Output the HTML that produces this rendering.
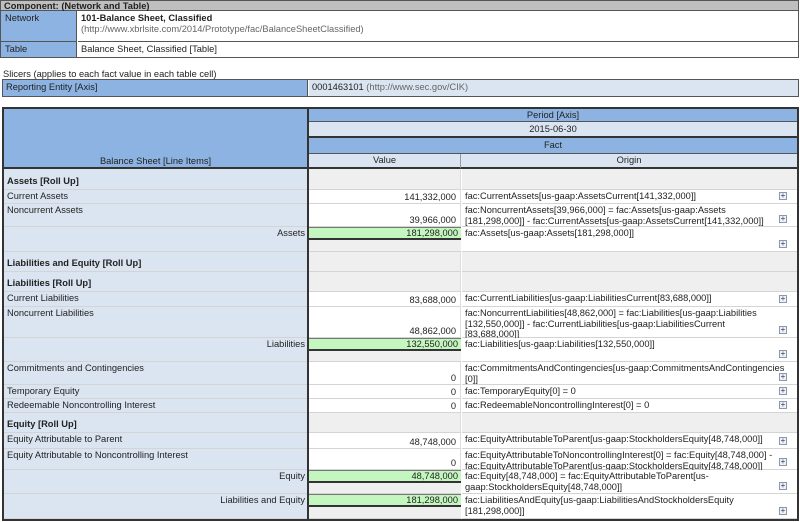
<!DOCTYPE html>
<html><head><meta charset="utf-8"><style>
*{margin:0;padding:0;box-sizing:border-box}
body{width:800px;height:522px;background:#fff;font-family:"Liberation Sans",Tahoma,sans-serif;font-size:9.3px;color:#222;position:relative;overflow:hidden;line-height:11px}
.a{position:absolute}
.bl{background:#8db3e2}
.lb{background:#dbe5f1}
.g{background:#efefef}
.w{background:#fff}
.gr{background:#c4f7c0}
.c{text-align:center}
.r{text-align:right}
.b{font-weight:bold}
.u{color:#666}
.p{position:absolute;right:10px;width:8px;height:8px;border:1px solid #8899aa;background:#eef2f8;font-size:8px;line-height:6px;text-align:center;color:#335}
</style></head><body>
<!-- component box -->
<div class="a" style="left:0;top:0;width:799px;height:58px;border:1px solid #555;background:#fff"></div>
<div class="a b" style="left:1px;top:1px;width:797px;height:10px;background:#bfbfbf;padding-left:3px;line-height:10px;border-bottom:1px solid #555">Component: (Network and Table)</div>
<div class="a bl" style="left:1px;top:11px;width:76px;height:31px;padding:2px 4px;border-right:1px solid #555;border-bottom:1px solid #555">Network</div>
<div class="a" style="left:78px;top:11px;width:720px;height:31px;padding:2px 3px;border-bottom:1px solid #555"><span class="b">101-Balance Sheet, Classified</span><br><span class="u">(http://www.xbrlsite.com/2014/Prototype/fac/BalanceSheetClassified)</span></div>
<div class="a bl" style="left:1px;top:42px;width:76px;height:15px;padding:2px 4px;border-right:1px solid #555">Table</div>
<div class="a" style="left:78px;top:42px;padding:2px 3px">Balance Sheet, Classified [Table]</div>
<div class="a" style="left:3px;top:69px">Slicers (applies to each fact value in each table cell)</div>
<div class="a" style="left:2px;top:79px;width:797px;height:18px;border:1px solid #555"></div>
<div class="a bl" style="left:3px;top:80px;width:305px;height:16px;padding:2px 3px;border-right:1px solid #555">Reporting Entity [Axis]</div>
<div class="a lb" style="left:309px;top:80px;width:489px;height:16px;padding:2px 3px">0001463101 <span class="u">(http://www.sec.gov/CIK)</span></div>
<!-- main table -->
<div class="a" style="left:2px;top:107px;width:797px;height:414px;border:2px solid #333;background:#fff"></div>
<div class="a bl" style="left:4px;top:109px;width:303px;height:60px;border-bottom:2px solid #333"></div>
<div class="a c" style="left:4px;top:156px;width:303px">Balance Sheet [Line Items]</div>
<div class="a" style="left:307px;top:109px;width:2px;height:410px;background:#333"></div>
<div class="a bl c" style="left:309px;top:109px;width:488px;height:13px;border-bottom:1px solid #555;line-height:13px">Period [Axis]</div>
<div class="a lb c" style="left:309px;top:122px;width:488px;height:16px;border-bottom:2px solid #333;line-height:15px">2015-06-30</div>
<div class="a bl c" style="left:309px;top:138px;width:488px;height:16px;border-bottom:1px solid #555;line-height:15px">Fact</div>
<div class="a lb c" style="left:309px;top:154px;width:152px;height:15px;border-bottom:2px solid #333;border-right:1px solid #999;line-height:13px">Value</div>
<div class="a lb c" style="left:461px;top:154px;width:336px;height:15px;border-bottom:2px solid #333;line-height:13px">Origin</div>
<div id="rows"></div>
<script>
var R=[
[169,21,'Assets [Roll Up]','h'],
[190,14,'Current Assets','n','141,332,000','fac:CurrentAssets[us-gaap:AssetsCurrent[141,332,000]]'],
[204,23,'Noncurrent Assets','n','39,966,000','fac:NoncurrentAssets[39,966,000] = fac:Assets[us-gaap:Assets<br>[181,298,000]] - fac:CurrentAssets[us-gaap:AssetsCurrent[141,332,000]]'],
[227,25,'Assets','t','181,298,000','fac:Assets[us-gaap:Assets[181,298,000]]'],
[252,20,'Liabilities and Equity [Roll Up]','h'],
[272,20,'Liabilities [Roll Up]','h'],
[292,15,'Current Liabilities','n','83,688,000','fac:CurrentLiabilities[us-gaap:LiabilitiesCurrent[83,688,000]]'],
[307,31,'Noncurrent Liabilities','n','48,862,000','fac:NoncurrentLiabilities[48,862,000] = fac:Liabilities[us-gaap:Liabilities<br>[132,550,000]] - fac:CurrentLiabilities[us-gaap:LiabilitiesCurrent<br>[83,688,000]]'],
[338,24,'Liabilities','t','132,550,000','fac:Liabilities[us-gaap:Liabilities[132,550,000]]'],
[362,23,'Commitments and Contingencies','n','0','fac:CommitmentsAndContingencies[us-gaap:CommitmentsAndContingencies<br>[0]]'],
[385,14,'Temporary Equity','n','0','fac:TemporaryEquity[0] = 0'],
[399,14,'Redeemable Noncontrolling Interest','n','0','fac:RedeemableNoncontrollingInterest[0] = 0'],
[413,20,'Equity [Roll Up]','h'],
[433,16,'Equity Attributable to Parent','n','48,748,000','fac:EquityAttributableToParent[us-gaap:StockholdersEquity[48,748,000]]'],
[449,21,'Equity Attributable to Noncontrolling Interest','n','0','fac:EquityAttributableToNoncontrollingInterest[0] = fac:Equity[48,748,000] -<br>fac:EquityAttributableToParent[us-gaap:StockholdersEquity[48,748,000]]'],
[470,24,'Equity','t','48,748,000','fac:Equity[48,748,000] = fac:EquityAttributableToParent[us-<br>gaap:StockholdersEquity[48,748,000]]'],
[494,25,'Liabilities and Equity','t','181,298,000','fac:LiabilitiesAndEquity[us-gaap:LiabilitiesAndStockholdersEquity<br>[181,298,000]]']
];
var h='';
R.forEach(function(r){
var y=r[0],H=r[1],bd='border-bottom:1px solid #d4d4d4;';
if(r[3]=='h'){
h+='<div class="a lb b" style="left:4px;top:'+y+'px;width:303px;height:'+H+'px;'+bd+'padding:'+(H-14)+'px 3px 0">'+r[2]+'</div>';
h+='<div class="a g" style="left:309px;top:'+y+'px;width:152px;height:'+H+'px;'+bd+'border-right:1px solid #ddd"></div>';
h+='<div class="a g" style="left:462px;top:'+y+'px;width:335px;height:'+H+'px;'+bd+'"></div>';
}else{
if(r[3]=='t'){
h+='<div class="a lb r" style="left:4px;top:'+y+'px;width:303px;height:'+H+'px;'+bd+'padding:1px 2px 0">'+r[2]+'</div>';
h+='<div class="a g" style="left:309px;top:'+y+'px;width:152px;height:'+H+'px;'+bd+'"></div>';
h+='<div class="a gr r" style="left:309px;top:'+y+'px;width:152px;height:13px;border-bottom:2px solid #333;border-top:1px solid #777;padding:0 3px">'+r[4]+'</div>';
}else{
h+='<div class="a lb" style="left:4px;top:'+y+'px;width:303px;height:'+H+'px;'+bd+'padding:1px 3px 0">'+r[2]+'</div>';
h+='<div class="a w r" style="left:309px;top:'+y+'px;width:152px;height:'+H+'px;'+bd+'border-right:1px solid #ddd;padding:0 4px;line-height:'+(2*H-13)+'px">'+r[4]+'</div>';
}
h+='<div class="a w" style="left:462px;top:'+y+'px;width:335px;height:'+H+'px;'+bd+'padding:1px 3px 0;line-height:10.5px">'+r[5]+'<div class="p" style="bottom:3px">+</div></div>';
}
});
document.getElementById('rows').innerHTML=h;
</script>
</body></html>
